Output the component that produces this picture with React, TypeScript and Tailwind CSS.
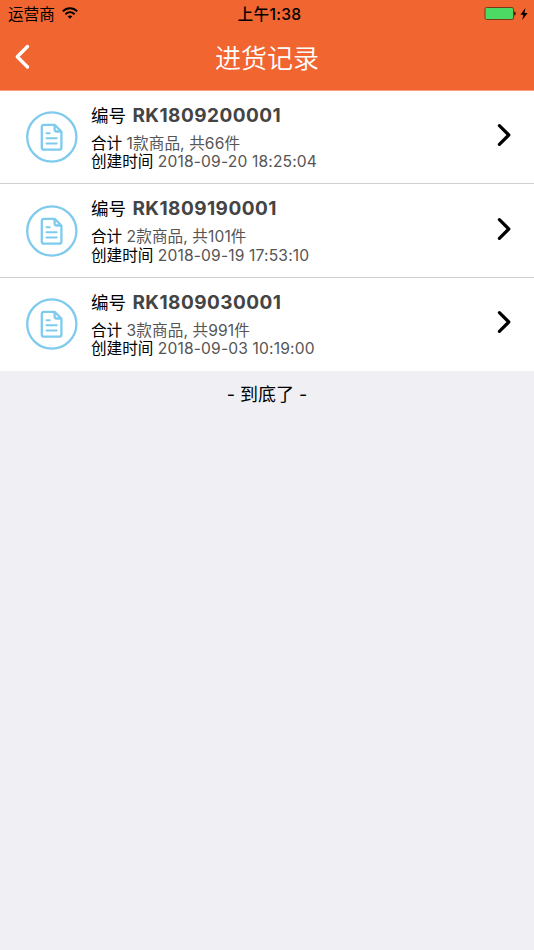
const records = [
  { code: 'RK1809200001', summary: '1款商品, 共66件', createdAt: '2018-09-20 18:25:04' },
  { code: 'RK1809190001', summary: '2款商品, 共101件', createdAt: '2018-09-19 17:53:10' },
  { code: 'RK1809030001', summary: '3款商品, 共991件', createdAt: '2018-09-03 10:19:00' },
];

function StatusBar() {
  return (
    <div className="grid h-7 grid-cols-3 items-center pl-2 pr-[6px] text-black">
      <div className="flex items-center gap-[7px]">
        <span className="pt-px text-[15.6px] leading-7">运营商</span>
        <svg className="-mt-[3px]" width="16" height="12" viewBox="0 0 16 12" fill="none" stroke="currentColor" strokeWidth="2">
          <path d="M0.8 4.4C4.9 0.3 11.1 0.3 15.2 4.4" />
          <path d="M3.4 7.2c2.7-2.6 6.5-2.6 9.2 0" />
          <path d="M8 11.8 5.6 9.3c1.4-1.2 3.4-1.2 4.8 0z" fill="currentColor" stroke="none" />
        </svg>
      </div>
      <div className="pl-[3px] pt-px text-center text-[15.6px] font-medium leading-7 tracking-[0.3px]">上午1:38</div>
      <div className="-mt-[2px] flex items-center justify-end gap-1">
        <svg width="32" height="13" viewBox="0 0 32 13">
          <rect x="1" y="0.5" width="28.5" height="12" rx="1.6" fill="#4cd964" stroke="#7a3a1a" />
          <path d="M30.3 4.5c1.8 0.3 1.8 3.7 0 4z" fill="#000" />
        </svg>
        <svg width="8" height="12" viewBox="0 0 8 12" fill="currentColor">
          <path d="M5.4 0 0.4 6.8h3L2.2 12l5.4-7.1H4.5z" />
        </svg>
      </div>
    </div>
  );
}

function DocumentIcon() {
  return (
    <svg
      className="shrink-0"
      width="52"
      height="52"
      viewBox="0 0 52 52"
      fill="none"
      stroke="#7ecbee"
      strokeWidth="2.3"
      strokeLinecap="round"
      strokeLinejoin="round"
    >
      <circle cx="25.8" cy="26" r="24.6" />
      <path d="M28.6 13.9H18a2.2 2.2 0 0 0-2.2 2.2v20.4a2.2 2.2 0 0 0 2.2 2.2h15.2a2.2 2.2 0 0 0 2.2-2.2V20.5L28.6 13.9v4.4a2.2 2.2 0 0 0 2.2 2.2h4.4" />
      <path d="M20.5 22.2h3.2M20.5 27.2h10.2M20.5 32.5h10.2" strokeWidth="2" />
    </svg>
  );
}

export default function App() {
  return (
    <div className="min-h-screen bg-[#efeff4] font-[Inter,'Noto_Sans_CJK_SC',sans-serif] text-black">
      <header className="h-[91px] border-b border-[#fb9f80] bg-[#f16531]">
        <StatusBar />
        <div className="grid h-[62px] grid-cols-[48px_1fr_48px] items-center">
          <button className="-mt-[5px] pl-[13px]" aria-label="返回">
            <svg width="18" height="26" viewBox="0 0 18 26" fill="none" stroke="#fff" strokeWidth="3.4" strokeLinecap="round" strokeLinejoin="round">
              <path d="M14.5 2.5 4.3 12.8 14.5 23" />
            </svg>
          </button>
          <h1 className="text-center text-[26px] font-[350] leading-9 text-white">进货记录</h1>
        </div>
      </header>

      <ul className="divide-y divide-[#d0d0d3] bg-white">
        {records.map(({ code, summary, createdAt }) => (
          <li key={code} className="flex h-[93.25px] items-center pl-[26px] pr-[22px] pt-[0.6px]">
            <DocumentIcon />
            <div className="ml-[13px] mt-[0.9px] flex-1 whitespace-nowrap text-[15.6px] leading-[18.5px]">
              <div className="mb-[7px] text-[17.5px] leading-6">
                编号 <span className="ml-[1.5px] text-[19px] font-bold tracking-[0.45px] text-[#444]">{code}</span>
              </div>
              <div>
                合计 <span className="tracking-[0.1px] text-[#555]">{summary}</span>
              </div>
              <div>
                创建时间 <span className="tracking-[0.16px] text-[#555]">{createdAt}</span>
              </div>
            </div>
            <svg className="-mt-[4px]" width="16" height="24" viewBox="0 0 16 24" fill="none" stroke="#000" strokeWidth="3.2" strokeLinecap="round" strokeLinejoin="round">
              <path d="M3.4 2.7 12.8 12 3.4 21.3" />
            </svg>
          </li>
        ))}
      </ul>

      <p className="pt-3 text-center text-[18px] leading-6">- 到底了 -</p>
    </div>
  );
}
